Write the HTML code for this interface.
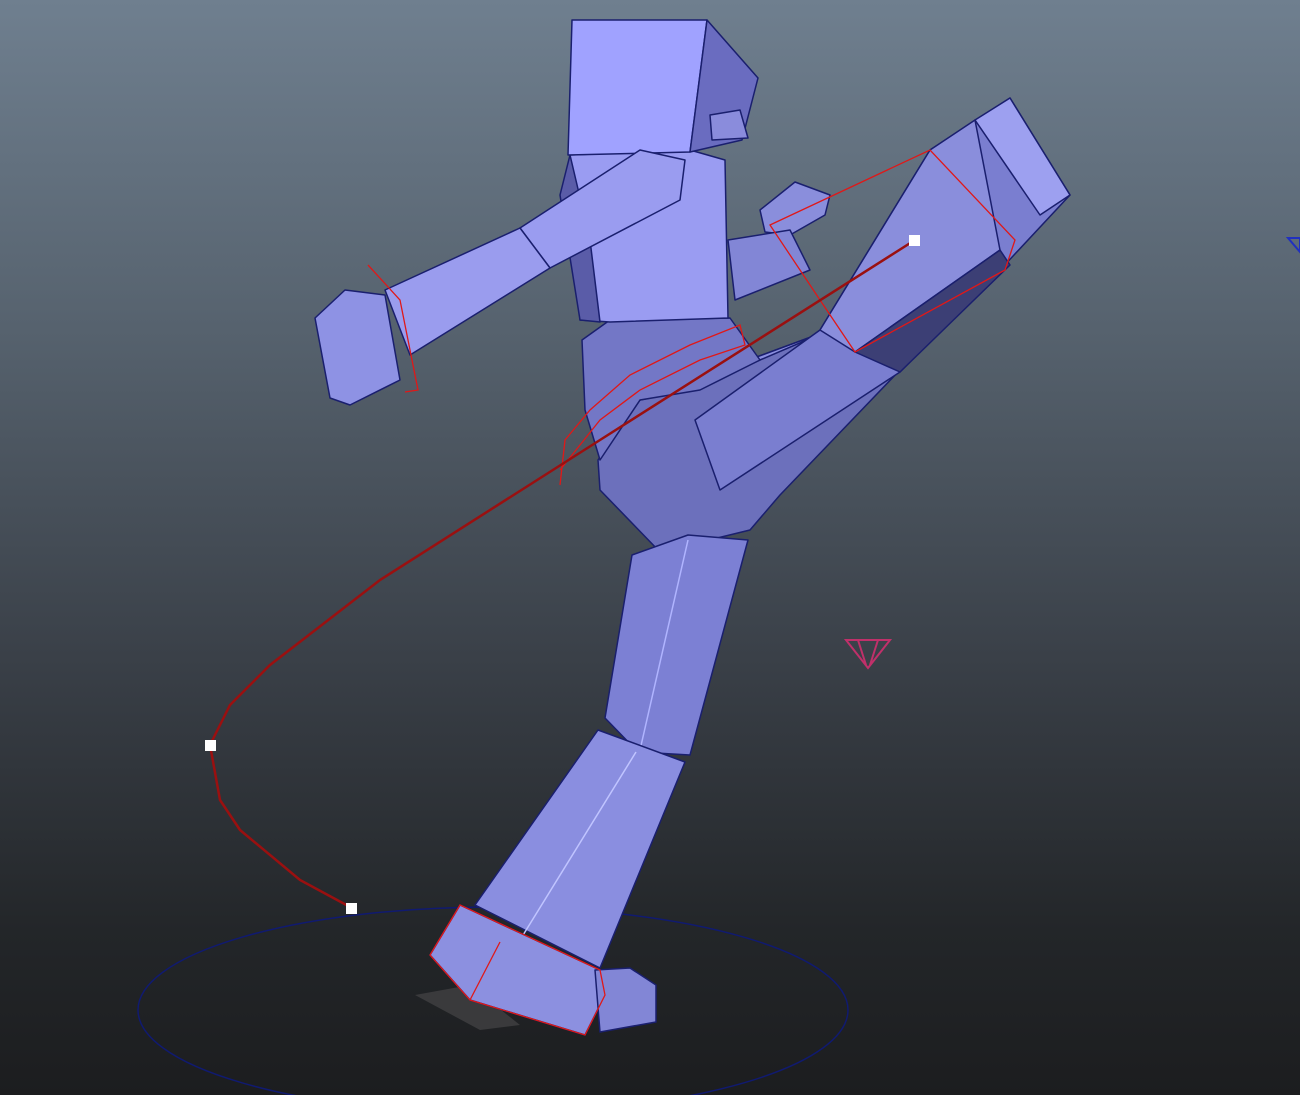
<!DOCTYPE html>
<html><head><meta charset="utf-8"><style>
html,body{margin:0;padding:0;width:1300px;height:1095px;overflow:hidden}
body{background:linear-gradient(#6f7f8f 0%,#56626e 30%,#3a4048 60%,#232629 85%,#1c1d1f 100%)}
svg{position:absolute;left:0;top:0}
</style></head><body>
<svg width="1300" height="1095" viewBox="0 0 1300 1095">
<g stroke="#1a1f6e" stroke-width="1.5" stroke-linejoin="round">
<!-- ground shadow -->
<polygon points="415,995 470,985 520,1025 480,1030" fill="#3a3a3c" stroke="none"/>
<!-- ellipse -->
<ellipse cx="493" cy="1010" rx="355" ry="103" fill="none" stroke="#101a70"/>
<!-- far hand -->
<polygon points="760,210 795,182 830,195 825,215 790,235 765,232" fill="#8a8edc"/>
<!-- far arm -->
<polygon points="728,240 790,230 810,270 735,300" fill="#8286d6"/>
<!-- kicking thigh -->
<polygon points="598,460 640,400 830,330 900,370 780,495 750,530 660,552 600,490" fill="#6c70bc"/>
<polygon points="640,400 830,330 760,360 690,390" fill="#8a8ee0"/>
<!-- kicking shin -->
<polygon points="695,420 820,330 930,150 1010,98 1070,195 1000,270 900,372 720,490" fill="#7a7ed0"/>
<polygon points="820,330 930,150 975,120 1000,250 855,352" fill="#8a8edc"/>
<polygon points="975,120 1010,98 1070,195 1040,215" fill="#9da0f0"/>
<polygon points="855,352 1000,250 1010,265 900,372" fill="#3c3f75"/>
<!-- pelvis -->
<polygon points="582,340 610,320 730,318 760,360 700,390 640,400 600,460 585,410" fill="#7377c6"/>
<!-- torso -->
<polygon points="570,155 690,150 725,160 728,318 610,322 580,320" fill="#9a9cf2"/>
<polygon points="570,155 560,195 580,320 600,322 590,240" fill="#5a5ca8"/>
<!-- head -->
<polygon points="572,20 707,20 690,152 568,155" fill="#a0a2ff"/>
<polygon points="707,20 758,78 742,140 690,152" fill="#6a6cc0"/>
<polygon points="710,115 740,110 748,138 712,140" fill="#8a8cdc"/>
<!-- arm upper -->
<polygon points="520,228 640,150 685,160 680,200 550,268" fill="#9a9cf0"/>
<!-- arm lower -->
<polygon points="385,290 520,228 550,268 410,355" fill="#9a9cee"/>
<!-- fist -->
<polygon points="315,318 345,290 385,295 400,380 350,405 330,398" fill="#8e92e4"/>
<!-- standing thigh -->
<polygon points="632,555 688,535 748,540 690,755 638,752 605,718" fill="#7c80d4"/>
<line x1="688" y1="540" x2="640" y2="750" stroke="#b0b4ff"/>
<!-- shin -->
<polygon points="598,730 685,762 600,968 475,905" fill="#8a8ee0"/>
<line x1="636" y1="752" x2="520" y2="940" stroke="#c0c4ff"/>
<!-- foot -->
<polygon points="430,955 460,905 600,970 605,995 585,1035 470,1000" fill="#8c90e0"/>
<polygon points="595,970 630,968 656,985 656,1022 600,1032" fill="#8286d6"/>
</g>
<!-- red outlines -->
<g fill="none" stroke="#e01818" stroke-width="1.3">
<polygon points="430,955 460,905 600,970 605,995 585,1035 470,1000"/>
<line x1="500" y1="942" x2="470" y2="1000"/>
<polyline points="368,265 400,300 418,390 405,392"/>
<polyline points="560,470 600,420 640,390 700,360 745,345 740,325 690,345 630,375 590,410 565,440 560,485"/>
<polygon points="770,225 930,150 1015,240 1005,270 855,352 820,300"/>
</g>
<!-- motion path -->
<polyline points="352,908 300,880 240,830 220,800 210,745 230,705 270,665 380,580 600,440 915,240" fill="none" stroke="#9a1010" stroke-width="2.5"/>
<g fill="#fff"><rect x="346" y="903" width="11" height="11"/><rect x="205" y="740" width="11" height="11"/><rect x="909" y="235" width="11" height="11"/></g>
<!-- camera icon -->
<g fill="none" stroke="#c0306a" stroke-width="2"><polygon points="846,640 890,640 868,668"/><line x1="858" y1="640" x2="866" y2="665"/><line x1="878" y1="640" x2="870" y2="665"/></g>
<polygon points="1288,238 1300,238 1300,252" fill="none" stroke="#2030c0" stroke-width="2"/>
</svg>
</body></html>
